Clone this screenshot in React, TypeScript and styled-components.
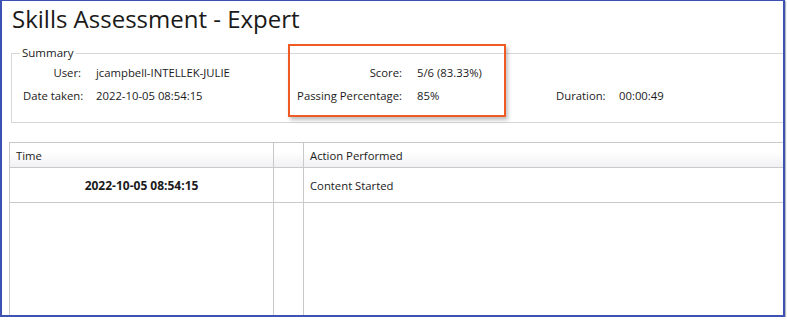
import React from "react";
import styled, { createGlobalStyle } from "styled-components";

const Global = createGlobalStyle`
  html, body { margin: 0; padding: 0; background: #ffffff; }
  body { font-family: "Open Sans", "Noto Sans", sans-serif; color: #1b1b1b; }
  * { box-sizing: border-box; }
`;

const Frame = styled.div`
  position: relative;
  width: 785px;
  height: 317px;
  border: 1px solid #3d52b4;
  border-left-width: 2px;
  border-right-width: 2px;
  border-bottom-width: 2px;
  box-shadow: 1px 1px 1px #b8b8b8;
  overflow: hidden;
  display: flex;
  flex-direction: column;
  background: #fff;
`;

const Title = styled.h1`
  margin: 0;
  height: 40px;
  padding: 1px 0 0 10px;
  font-size: 24px;
  font-weight: 400;
  line-height: 34px;
  color: #1a1a1a;
  white-space: nowrap;
`;

const Group = styled.fieldset`
  margin: 5px -20px 0 9px;
  padding: 1px 0 0 11px;
  height: 77px;
  border: 1px solid #d7d7d7;
  min-width: 0;
`;

const Legend = styled.legend`
  padding: 0 2px;
  margin-left: -3px;
  font-size: 11.5px;
  line-height: 14px;
  color: #1a1a1a;
`;

const SummaryGrid = styled.div`
  display: grid;
  grid-template-columns: 58px 209px 112px 154px 63px 1fr;
  grid-auto-rows: 23px;
  font-size: 11.3px;
  line-height: 23px;
  white-space: nowrap;
`;

const Label = styled.div<{ $align?: "left" | "right" }>`
  text-align: ${(p) => p.$align ?? "right"};
`;

const Value = styled.div<{ $indent?: number }>`
  padding-left: ${(p) => p.$indent ?? 15}px;
`;

const Highlight = styled.div`
  position: absolute;
  left: 286px;
  top: 43px;
  width: 218px;
  height: 73px;
  border: 2px solid #f05a24;
  box-shadow: 2px 3px 4px rgba(0, 0, 0, 0.25);
  pointer-events: none;
`;

const Table = styled.div`
  margin: 19px -20px 0 7px;
  flex: 1;
  display: grid;
  grid-template-columns: 264px 30px 1fr;
  grid-template-rows: 25px 35px 1fr;
  border-top: 1px solid #c9c9c9;
  border-left: 1px solid #c9c9c9;
  font-size: 11.3px;
`;

const HeadCell = styled.div`
  display: flex;
  align-items: center;
  padding-left: 6px;
  background: linear-gradient(#ffffff 0%, #ffffff 35%, #f1f1f4 100%);
  border-right: 1px solid #c9c9c9;
  border-bottom: 1px solid #c9c9c9;
  white-space: nowrap;
`;

const Cell = styled.div<{ $center?: boolean; $bold?: boolean; $fill?: boolean }>`
  display: flex;
  align-items: center;
  justify-content: ${(p) => (p.$center ? "center" : "flex-start")};
  padding-left: ${(p) => (p.$center ? 0 : 6)}px;
  font-weight: ${(p) => (p.$bold ? 700 : 400)};
  font-size: ${(p) => (p.$bold ? "12px" : "inherit")};
  border-right: 1px solid #c9c9c9;
  border-bottom: ${(p) => (p.$fill ? "none" : "1px solid #c9c9c9")};
  white-space: nowrap;
`;

export default function App() {
  return (
    <>
      <Global />
      <Frame>
        <Title>Skills Assessment - Expert</Title>
        <Group>
          <Legend>Summary</Legend>
          <SummaryGrid>
            <Label>User:</Label>
            <Value>jcampbell-INTELLEK-JULIE</Value>
            <Label>Score:</Label>
            <Value>5/6 (83.33%)</Value>
            <div />
            <div />
            <Label>Date taken:</Label>
            <Value>2022-10-05 08:54:15</Value>
            <Label>Passing Percentage:</Label>
            <Value>85%</Value>
            <Label $align="left">Duration:</Label>
            <Value $indent={0}>00:00:49</Value>
          </SummaryGrid>
        </Group>
        <Highlight />
        <Table>
          <HeadCell>Time</HeadCell>
          <HeadCell />
          <HeadCell>Action Performed</HeadCell>
          <Cell $center $bold>2022-10-05 08:54:15</Cell>
          <Cell />
          <Cell>Content Started</Cell>
          <Cell $fill />
          <Cell $fill />
          <Cell $fill />
        </Table>
      </Frame>
    </>
  );
}
